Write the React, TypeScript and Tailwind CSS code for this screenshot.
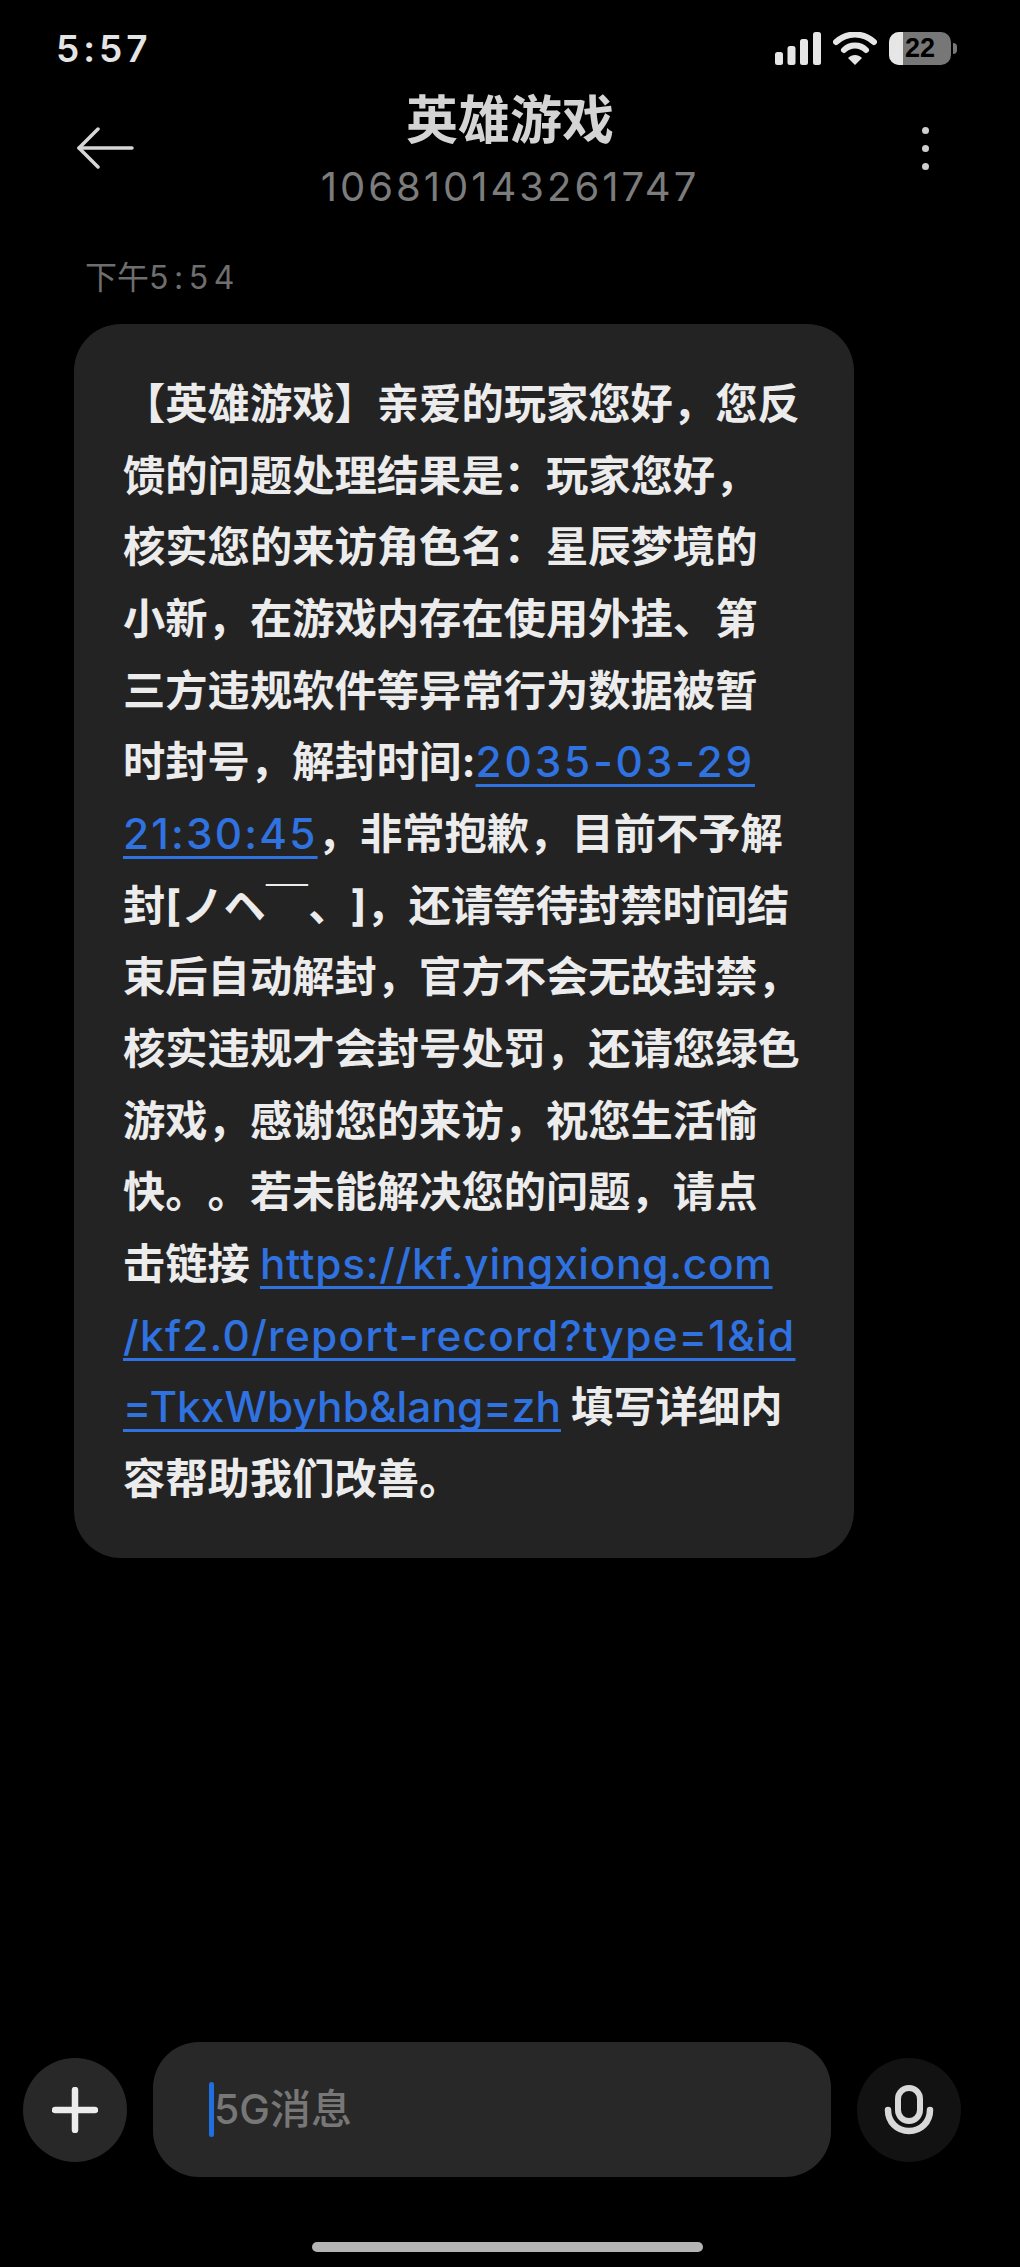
const cjk = "font-['Inter','Noto_Sans_CJK_SC',sans-serif] [text-spacing-trim:space-all]";

function Link({ children, className }: { children: React.ReactNode; className: string }) {
  return (
    <span className={`text-[#2f72e0] underline decoration-[3px] underline-offset-[7px] [text-decoration-skip-ink:none] font-medium ${className}`}>
      {children}
    </span>
  );
}

const plainTop = [
  "【英雄游戏】亲爱的玩家您好，您反",
  "馈的问题处理结果是：玩家您好，",
  "核实您的来访角色名：星辰梦境的",
  "小新，在游戏内存在使用外挂、第",
  "三方违规软件等异常行为数据被暂",
];
const plainMid = [
  "封[ノヘ￣、]，还请等待封禁时间结",
  "束后自动解封，官方不会无故封禁，",
  "核实违规才会封号处罚，还请您绿色",
  "游戏，感谢您的来访，祝您生活愉",
  "快。。若未能解决您的问题，请点",
];

export default function App() {
  return (
    <div className={`flex h-[2267px] w-[1020px] flex-col bg-black ${cjk}`}>
      <div className="flex h-[91px] items-start justify-between pl-[56px] pr-[63px] pt-[32px]">
        <span className="text-[37px] leading-[34px] font-semibold tracking-[4px] text-[#e4e4e4]">5:57</span>
        <div className="flex items-center gap-[12px]">
          <svg width="46" height="33" viewBox="0 0 46 33" fill="#e6e6e6">
            <rect x="0" y="20" width="8" height="13" rx="2.5" />
            <rect x="12.5" y="14" width="8" height="19" rx="2.5" />
            <rect x="25" y="7" width="8" height="26" rx="2.5" />
            <rect x="38" y="0" width="8" height="33" rx="2.5" />
          </svg>
          <svg width="44" height="33" viewBox="0 0 44 33" fill="none" stroke="#e6e6e6" strokeWidth="6" strokeLinecap="round">
            <path d="M3 10 C14 0 30 0 41 10" />
            <path d="M11 18 C17 12 27 12 33 18" />
            <path d="M22 33 L15 26 C19 22 25 22 29 26 Z" fill="#e6e6e6" stroke="none" />
          </svg>
          <div className="flex items-center gap-[2px]">
            <div className="flex h-[33px] w-[62px] items-center overflow-hidden rounded-[10px] bg-[#777777]">
              <div className="h-full w-[14px] shrink-0 bg-[#e6e6e6]" />
              <span className="w-[34px] text-center text-[27px] leading-[33px] font-bold text-black font-['Liberation_Sans',sans-serif]">22</span>
            </div>
            <div className="h-[11px] w-[4px] rounded-r-full bg-[#777777]" />
          </div>
        </div>
      </div>

      <div className="grid h-[119px] grid-cols-[1fr_auto_1fr] items-center">
        <div className="pl-[76px]">
          <svg width="58" height="42" viewBox="0 0 58 42" fill="none" stroke="#d6d6d6" strokeWidth="3.5" strokeLinecap="round" strokeLinejoin="round" className="mt-[-5px]">
            <path d="M22 2 L3 21 L22 40" />
            <path d="M3 21 H56" />
          </svg>
        </div>
        <div className="flex flex-col items-center gap-[13px]">
          <span className="text-[52px] leading-[60px] font-bold text-[#d4d4d4]">英雄游戏</span>
          <span className="text-[40px] leading-[46px] font-normal tracking-[3px] text-[#7c7c7c]">106810143261747</span>
        </div>
        <div className="flex justify-end pr-[91px]">
          <div className="mt-[-5px] flex flex-col gap-[11px]">
            <div className="size-[7px] rounded-full bg-[#cfcfcf]" />
            <div className="size-[7px] rounded-full bg-[#cfcfcf]" />
            <div className="size-[7px] rounded-full bg-[#cfcfcf]" />
          </div>
        </div>
      </div>

      <div className="pl-[85px] pt-[48px] text-[32px] leading-[40px] text-[#6e6e6e]">
        下午<span className="tracking-[5.5px]">5:54</span>
      </div>

      <div className="mt-[26px] ml-[74px] w-[780px] rounded-[47px] bg-[#232323] pb-[43px] pl-[49px] pt-[44px] text-[42.3px] leading-[71.67px] font-bold text-[#ececec]">
        {plainTop.map((l) => (
          <div key={l} className="whitespace-nowrap">{l}</div>
        ))}
        <div className="whitespace-nowrap">
          时封号，解封时间:<Link className="tracking-[2.9px]">2035-03-29</Link>
        </div>
        <div className="whitespace-nowrap">
          <Link className="tracking-[2.2px]">21:30:45</Link>，非常抱歉，目前不予解
        </div>
        {plainMid.map((l) => (
          <div key={l} className="whitespace-nowrap">{l}</div>
        ))}
        <div className="whitespace-nowrap">
          击链接 <Link className="tracking-[0.75px]">https://kf.yingxiong.com</Link>
        </div>
        <div className="whitespace-nowrap">
          <Link className="tracking-[1.3px]">/kf2.0/report-record?type=1&amp;id</Link>
        </div>
        <div className="whitespace-nowrap">
          <Link className="tracking-[0.1px]">=TkxWbyhb&amp;lang=zh</Link> 填写详细内
        </div>
        <div className="whitespace-nowrap">容帮助我们改善。</div>
      </div>

      <div className="flex-1" />

      <div className="flex items-center pl-[23px]">
        <div className="flex size-[104px] items-center justify-center rounded-full bg-[#282828]">
          <svg width="46" height="46" viewBox="0 0 46 46" stroke="#ececec" strokeLinecap="round" fill="none" strokeWidth="6.5">
            <path d="M3 23 H43" />
            <path d="M23 3 V43" />
          </svg>
        </div>
        <div className="ml-[26px] flex h-[135px] w-[678px] items-center rounded-[46px] bg-[#282828] pl-[56px]">
          <div className="h-[55px] w-[5px] rounded-full bg-[#1f6fe0]" />
          <span className="text-[41px] leading-[55px] font-medium text-[#777777]">5G消息</span>
        </div>
        <div className="ml-[26px] flex size-[104px] items-center justify-center rounded-full bg-[#121212]">
          <svg width="50" height="50" viewBox="0 0 50 50" fill="none" stroke="#d8d8d8" strokeLinecap="round">
            <rect x="14" y="3" width="22" height="33" rx="11" strokeWidth="6" />
            <path d="M4 25 C4 37 13 46 25 46 C37 46 46 37 46 25" strokeWidth="6.5" />
          </svg>
        </div>
      </div>

      <div className="flex h-[90px] justify-start pl-[312px] pt-[65px]">
        <div className="h-[10px] w-[391px] rounded-full bg-[#b4b4b4]" />
      </div>
    </div>
  );
}
